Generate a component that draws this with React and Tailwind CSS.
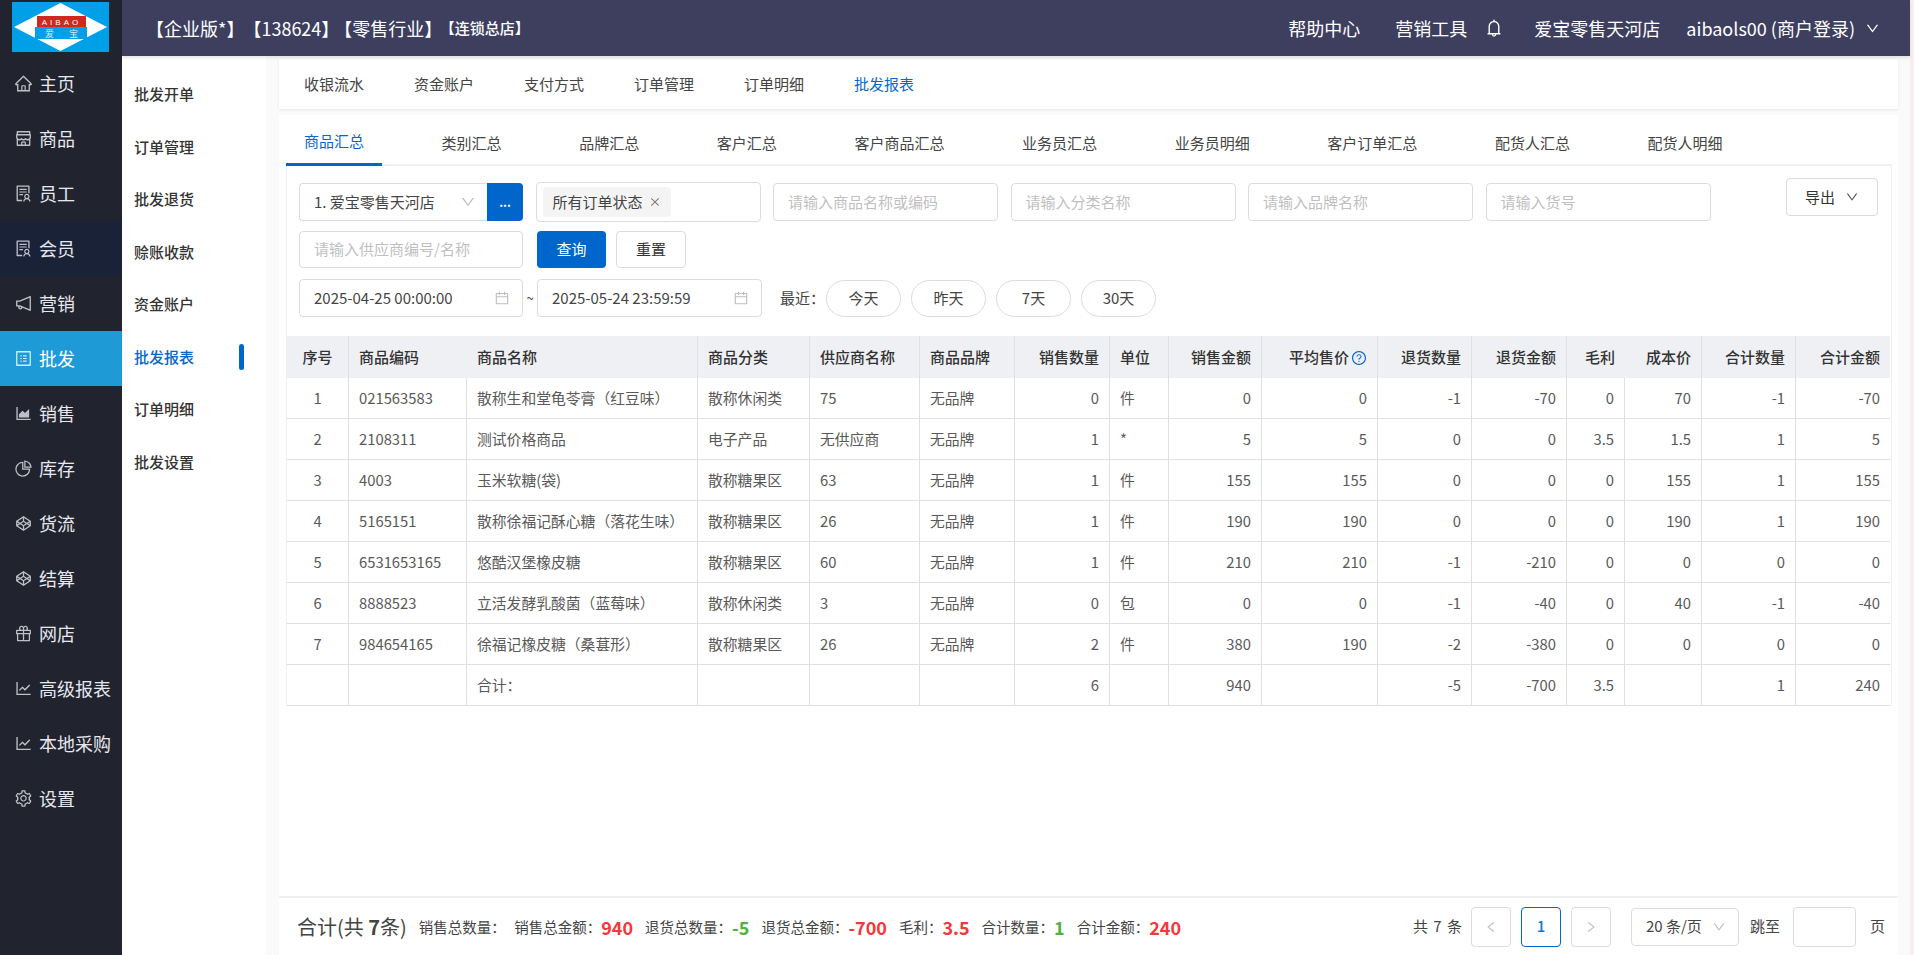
import React from "react";
import {
  AiOutlineHome, AiOutlineShop, AiOutlineSolution, AiOutlineNotification, AiOutlineProfile,
  AiOutlineAreaChart, AiOutlinePieChart, AiOutlineCodepen, AiOutlineGift, AiOutlineLineChart,
  AiOutlineSetting, AiOutlineBell, AiOutlineDown, AiOutlineCalendar, AiOutlineQuestionCircle,
  AiOutlineLeft, AiOutlineRight, AiOutlineClose,
} from "react-icons/ai";

const nav = [
  ["主页", AiOutlineHome], ["商品", AiOutlineShop], ["员工", AiOutlineSolution], ["会员", AiOutlineSolution],
  ["营销", AiOutlineNotification], ["批发", AiOutlineProfile], ["销售", AiOutlineAreaChart], ["库存", AiOutlinePieChart],
  ["货流", AiOutlineCodepen], ["结算", AiOutlineCodepen], ["网店", AiOutlineGift],
  ["高级报表", AiOutlineLineChart], ["本地采购", AiOutlineLineChart], ["设置", AiOutlineSetting],
];
const sub = ["批发开单", "订单管理", "批发退货", "赊账收款", "资金账户", "批发报表", "订单明细", "批发设置"];
const topTabs = ["收银流水", "资金账户", "支付方式", "订单管理", "订单明细", "批发报表"];
const tabs = ["商品汇总", "类别汇总", "品牌汇总", "客户汇总", "客户商品汇总", "业务员汇总", "业务员明细", "客户订单汇总", "配货人汇总", "配货人明细"];
const widths = [62, 118, 231, 112, 110, 95, 95, 59, 93, 116, 94, 95, 58, 77, 94, 94];
const heads = ["序号", "商品编码", "商品名称", "商品分类", "供应商名称", "商品品牌", "销售数量", "单位", "销售金额", "平均售价", "退货数量", "退货金额", "毛利", "成本价", "合计数量", "合计金额"];
const rows = [
  ["1", "021563583", "散称生和堂龟苓膏（红豆味）", "散称休闲类", "75", "无品牌", "0", "件", "0", "0", "-1", "-70", "0", "70", "-1", "-70"],
  ["2", "2108311", "测试价格商品", "电子产品", "无供应商", "无品牌", "1", "*", "5", "5", "0", "0", "3.5", "1.5", "1", "5"],
  ["3", "4003", "玉米软糖(袋)", "散称糖果区", "63", "无品牌", "1", "件", "155", "155", "0", "0", "0", "155", "1", "155"],
  ["4", "5165151", "散称徐福记酥心糖（落花生味）", "散称糖果区", "26", "无品牌", "1", "件", "190", "190", "0", "0", "0", "190", "1", "190"],
  ["5", "6531653165", "悠酷汉堡橡皮糖", "散称糖果区", "60", "无品牌", "1", "件", "210", "210", "-1", "-210", "0", "0", "0", "0"],
  ["6", "8888523", "立活发酵乳酸菌（蓝莓味）", "散称休闲类", "3", "无品牌", "0", "包", "0", "0", "-1", "-40", "0", "40", "-1", "-40"],
  ["7", "984654165", "徐福记橡皮糖（桑葚形）", "散称糖果区", "26", "无品牌", "2", "件", "380", "190", "-2", "-380", "0", "0", "0", "0"],
  ["", "", "合计：", "", "", "", "6", "", "940", "", "-5", "-700", "3.5", "", "1", "240"],
];
const alignOf = (i) => (i === 0 ? "text-center" : i >= 6 && i !== 7 ? "text-right" : "text-left");
const noHeadBorder = [1, 12, 15];

function Logo() {
  return (
    <svg width="97" height="50" viewBox="0 0 97 50" className="block">
      <rect width="97" height="50" fill="#00a0e9" />
      <polygon points="2,25 48.5,1 95,25 48.5,49" fill="#ffffff" />
      <rect x="25" y="14" width="49" height="11" fill="#d0281f" />
      <rect x="23" y="25" width="52" height="12" fill="#00a0e9" />
      <text x="49.5" y="22.5" fill="#ffffff" fontSize="8" textAnchor="middle" letterSpacing="3" fontFamily="Liberation Sans">AIBAO</text>
      <text x="33" y="35" fill="#cfeefc" fontSize="9" fontFamily="Noto Sans CJK SC">爱</text>
      <text x="57" y="35" fill="#cfeefc" fontSize="9" fontFamily="Noto Sans CJK SC">宝</text>
    </svg>
  );
}

function Box({ w, children, className = "" }) {
  return (
    <div className={`flex shrink-0 items-center whitespace-nowrap rounded border border-[#dcdcdc] bg-white text-[15px] ${w} ${className}`}>
      {children}
    </div>
  );
}
const Ph = ({ w, text }) => (
  <Box w={`${w} h-[38px] px-[14px] text-[#bfbfbf]`}>{text}</Box>
);

export default function App() {
  return (
    <div className="flex h-[955px] w-full overflow-hidden bg-[#f7eeee] text-[#333] [font-family:'Noto_Sans_CJK_SC','Noto_Sans',sans-serif]">
      <div className="flex min-w-0 flex-1">
        <aside className="flex w-[122px] shrink-0 flex-col bg-[#21232f]">
          <div className="flex h-[56px] items-start pl-[12px] pt-[2px]"><Logo /></div>
          {nav.map(([t, I]) => (
            <div
              key={t}
              className={`flex h-[55px] items-center gap-[6px] pl-[14px] text-[18px] ${t === "批发" ? "bg-[#1e9bd7] text-white" : t === "会员" ? "bg-[#1a2238] text-[#e6e8ee]" : "text-[#e6e8ee]"}`}
            >
              <I className="shrink-0 text-[19px] opacity-80" />
              <span className="whitespace-nowrap">{t}</span>
            </div>
          ))}
        </aside>
        <div className="flex min-w-0 flex-1 flex-col">
          <header className="relative z-10 flex h-[56px] shrink-0 items-center bg-[#3e3f5f] pl-[24px] text-white shadow-[0_2px_3px_rgba(0,0,0,0.1)]">
            <div className="flex items-center whitespace-nowrap text-[18px] [text-spacing-trim:space-all]">
              <span>【企业版*】</span>
              <span className="-ml-[1px]">【138624】</span>
              <span className="-ml-[5px]">【零售行业】</span>
              <span className="-ml-[2.5px] text-[15px] font-medium">【连锁总店】</span>
            </div>
            <div className="ml-auto flex items-center whitespace-nowrap pr-[30px] text-[18px]">
              <span>帮助中心</span>
              <span className="ml-[35px]">营销工具</span>
              <AiOutlineBell className="ml-[17px] text-[20px]" />
              <span className="ml-[30px]">爱宝零售天河店</span>
              <span className="ml-[26px]">aibaols00 (商户登录)</span>
              <AiOutlineDown className="ml-[10px] text-[15px]" />
            </div>
          </header>
          <div className="flex min-h-0 flex-1">
            <nav className="flex w-[144px] shrink-0 flex-col bg-white pt-[12px]">
              {sub.map((t) => (
                <div key={t} className={`flex h-[52.5px] shrink-0 items-center pl-[12px] pr-[22px] text-[15px] font-medium ${t === "批发报表" ? "text-[#0a66cc]" : "text-[#333]"}`}>
                  <span>{t}</span>
                  {t === "批发报表" && <span className="ml-auto h-[26px] w-[5px] rounded-full bg-[#0066cc]" />}
                </div>
              ))}
            </nav>
            <main className="flex min-w-0 flex-1 flex-col bg-[#fafafa] pl-[13px] pr-[12px] pt-[3px]">
              <div className="flex h-[50px] shrink-0 items-center bg-white pl-[25px] shadow-[0_1px_3px_rgba(0,0,0,0.08)]">
                {topTabs.map((t) => (
                  <span key={t} className={`mr-[50px] w-[60px] whitespace-nowrap text-[15px] ${t === "批发报表" ? "text-[#0a66cc]" : "text-[#444]"}`}>{t}</span>
                ))}
              </div>
              <section className="mt-[6px] flex min-h-0 flex-1 flex-col bg-white">
                <div className="flex min-h-0 flex-1 flex-col pl-[7px] pr-[6px]">
                  <div className="flex h-[51px] shrink-0 border-b-[2px] border-[#f0f0f0] pt-[5px]">
                    {tabs.map((t, i) => (
                      <div key={t} className={`mb-[-2px] mr-[41.6px] flex items-center whitespace-nowrap px-[18px] text-[15px] ${i === 0 ? "border-b-[3px] border-[#0066cc] text-[#0a66cc]" : "text-[#444]"}`}>{t}</div>
                    ))}
                  </div>
                  <div className="flex shrink-0 flex-col border-x border-[#f0f0f0]">
                    <div className="flex justify-between pl-[12px] pr-[13px] pt-[16px]">
                      <div className="flex flex-col">
                        <div className="flex items-center gap-[12.5px]">
                          <div className="flex w-[224px] shrink-0 items-center">
                            <Box w="w-[188px] h-[38px] rounded-r-none border-r-0 pl-[14px] pr-[11px] text-[#444]">
                              <span>1. 爱宝零售天河店</span>
                              <AiOutlineDown className="ml-auto text-[16px] text-[#bfbfbf]" />
                            </Box>
                            <div className="flex h-[38px] w-[36px] items-center justify-center rounded-r bg-[#0066cc] text-[12px] font-bold leading-none text-white">...</div>
                          </div>
                          <Box w="w-[225px] h-[40px] px-[6px]">
                            <span className="flex h-[30px] items-center gap-[6px] rounded-sm bg-[#f4f4f4] px-[10px] text-[#444]">
                              所有订单状态<AiOutlineClose className="text-[12px] text-[#777]" />
                            </span>
                          </Box>
                          <Ph w="w-[225px]" text="请输入商品名称或编码" />
                          <Ph w="w-[225px]" text="请输入分类名称" />
                          <Ph w="w-[225px]" text="请输入品牌名称" />
                          <Ph w="w-[225px]" text="请输入货号" />
                        </div>
                        <div className="mt-[9px] flex items-center">
                          <Box w="w-[224px] h-[37px] px-[14px] text-[#bfbfbf]">请输入供应商编号/名称</Box>
                          <button className="ml-[14px] h-[37px] w-[69px] rounded-sm bg-[#0066cc] text-[15px] text-white">查询</button>
                          <button className="ml-[10px] h-[37px] w-[70px] rounded-sm border border-[#dcdcdc] bg-white text-[15px] text-[#333]">重置</button>
                        </div>
                        <div className="mt-[11px] flex items-center">
                          <Box w="w-[224px] h-[38px] pl-[14px] pr-[12px] text-[14.5px] text-[#444]">
                            <span>2025-04-25 00:00:00</span>
                            <AiOutlineCalendar className="ml-auto text-[16px] text-[#bfbfbf]" />
                          </Box>
                          <span className="w-[14px] text-center text-[13px] text-[#444]">~</span>
                          <Box w="w-[225px] h-[38px] pl-[14px] pr-[12px] text-[14.5px] text-[#444]">
                            <span>2025-05-24 23:59:59</span>
                            <AiOutlineCalendar className="ml-auto text-[16px] text-[#bfbfbf]" />
                          </Box>
                          <span className="ml-[18px] mr-[2px] w-[44px] whitespace-nowrap text-[15px] text-[#444]">最近：</span>
                          <div className="flex gap-[10px]">
                            {["今天", "昨天", "7天", "30天"].map((t) => (
                              <button key={t} className="h-[37px] w-[75px] rounded-full border border-[#dcdcdc] bg-white text-[15px] text-[#444]">{t}</button>
                            ))}
                          </div>
                        </div>
                      </div>
                      <div className="-mt-[4px]">
                        <button className="flex h-[38px] w-[92px] items-center justify-center gap-[10px] rounded-sm border border-[#dcdcdc] bg-white text-[15px] text-[#333]">
                          导出<AiOutlineDown className="text-[14px] text-[#555]" />
                        </button>
                      </div>
                    </div>
                    <table className="mt-[19px] w-[1603px] table-fixed border-separate border-spacing-0 text-[14.8px] text-[#595959]">
                      <colgroup>
                        {widths.map((w, i) => <col key={i} style={{ width: w }} />)}
                      </colgroup>
                      <thead>
                        <tr className="h-[42px] bg-[#eff0f4]">
                          {heads.map((h, i) => (
                            <th key={h} className={`whitespace-nowrap px-[10px] text-[15px] font-medium text-[#333] ${alignOf(i)} ${noHeadBorder.includes(i) ? "" : "border-r border-[#dfe0e4]"}`}>
                              {h}
                              {h === "平均售价" && <AiOutlineQuestionCircle className="ml-[2px] inline-block align-[-3px] text-[16px] text-[#0a66cc]" />}
                            </th>
                          ))}
                        </tr>
                      </thead>
                      <tbody>
                        {rows.map((r, ri) => (
                          <tr key={ri} className="h-[41px]">
                            {r.map((c, i) => (
                              <td key={i} className={`overflow-hidden whitespace-nowrap border-b border-[#e0e0e0] px-[10px] ${i < 15 ? "border-r" : ""} ${alignOf(i)}`}>{c}</td>
                            ))}
                          </tr>
                        ))}
                      </tbody>
                    </table>
                  </div>
                </div>
                <footer className="flex h-[59px] shrink-0 items-center border-t-[2px] border-[#f0f0f0] pl-[18px] pr-[13px]">
                  <span className="mr-[12px] whitespace-nowrap text-[20px] text-[#444]">合计(共 <b className="font-bold">7</b>条)</span>
                  <div className="flex items-center gap-[12px] whitespace-nowrap text-[14.5px] text-[#444]">
                    {[["销售总数量：", "", ""], ["销售总金额：", "940", "r"], ["退货总数量：", "-5", "g"], ["退货总金额：", "-700", "r"], ["毛利：", "3.5", "r"], ["合计数量：", "1", "g"], ["合计金额：", "240", "r"]].map(([l, v, c]) => (
                      <span key={l} className={`flex items-center ${v ? "" : "-mr-[3.6px]"}`}>
                        {l}
                        {v && <b className={`text-[18px] font-bold leading-none ${c === "r" ? "text-[#f5363a]" : "text-[#52b043]"}`}>{v}</b>}
                      </span>
                    ))}
                  </div>
                  <div className="ml-auto flex items-center whitespace-nowrap text-[15px] text-[#444]">
                    <span className="tracking-[1px]">共 7 条</span>
                    <span className="ml-[8px] flex h-[40px] w-[40px] items-center justify-center rounded-sm border border-[#dcdcdc] text-[#bfbfbf]"><AiOutlineLeft className="text-[14px]" /></span>
                    <span className="ml-[10px] flex h-[40px] w-[40px] items-center justify-center rounded-sm border border-[#0066cc] font-medium text-[#0a7ad6]">1</span>
                    <span className="ml-[10px] flex h-[40px] w-[40px] items-center justify-center rounded-sm border border-[#dcdcdc] text-[#bfbfbf]"><AiOutlineRight className="text-[14px]" /></span>
                    <span className="ml-[20px] flex h-[38px] w-[108px] items-center justify-between rounded border border-[#dcdcdc] pl-[14px] pr-[12px]">20 条/页<AiOutlineDown className="text-[14px] text-[#bfbfbf]" /></span>
                    <span className="ml-[11px]">跳至</span>
                    <span className="ml-[13px] h-[40px] w-[63px] rounded-sm border border-[#dcdcdc]" />
                    <span className="ml-[14px]">页</span>
                  </div>
                </footer>
              </section>
            </main>
          </div>
        </div>
      </div>
      <div className="w-[4px] shrink-0 bg-[#f7eeee]" />
    </div>
  );
}
